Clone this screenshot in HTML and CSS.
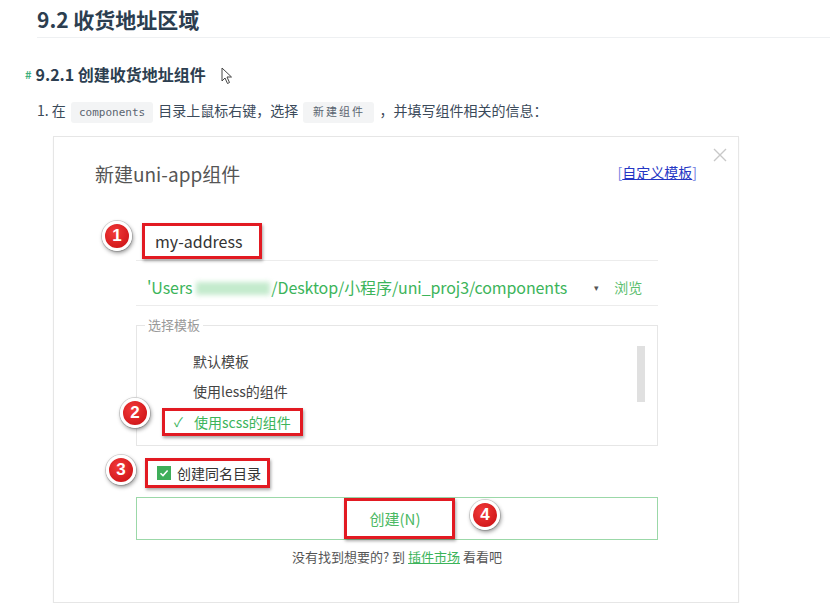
FILE: index.html
```html
<!DOCTYPE html>
<html lang="zh-CN">
<head>
    <meta charset="UTF-8">
    <meta name="viewport" content="width=device-width, initial-scale=1.0">
    <title>9.2 收货地址区域</title>
    <link rel="stylesheet" href="styles.css">
</head>
<body>
    <div class="doc">
        <h2 class="title">9.2 收货地址区域</h2>

        <h3 class="subtitle">
            <span class="anchor">#</span>9.2.1 创建收货地址组件
            <svg class="cursor" width="12" height="18" viewBox="0 0 12 18">
                <path d="M1 1 L1 14 L4 11 L6.5 16.5 L8.5 15.5 L6 10 L10.5 10 Z" fill="#fff" stroke="#444" stroke-width="1" stroke-linejoin="round"/>
            </svg>
        </h3>

        <ol class="steps">
            <li>在 <code>components</code> 目录上鼠标右键，选择 <code class="cjk">新建组件</code> ，并填写组件相关的信息：</li>
        </ol>

        <!-- screenshot of the HBuilderX dialog -->
        <div class="dialog">
            <svg class="close" width="14" height="14" viewBox="0 0 14 14">
                <path d="M1 1 L13 13 M13 1 L1 13" stroke="#c8c8c8" stroke-width="1.4"/>
            </svg>

            <div class="dlg-head">
                <span class="dlg-title">新建uni-app组件</span>
                <a class="tpl-link"><span class="bracket">[</span><u>自定义模板</u><span class="bracket">]</span></a>
            </div>

            <div class="form">
                <div class="field name-field">
                    <span class="mark name-mark">my-address</span>
                </div>

                <div class="field path-field">
                    <span class="path">'Users<span class="blur"></span>/Desktop/小程序/uni_proj3/components</span>
                    <span class="caret">▾</span>
                    <span class="browse">浏览</span>
                </div>

                <fieldset class="tpl-box">
                    <legend>选择模板</legend>
                    <div class="tpl-inner">
                        <ul class="tpl-list">
                            <li>默认模板</li>
                            <li>使用less的组件</li>
                            <li class="sel"><span class="mark sel-mark"><span class="tick">✓</span>使用scss的组件</span></li>
                        </ul>
                        <div class="scrollbar"></div>
                    </div>
                </fieldset>

                <div class="check-row">
                    <span class="mark check-mark">
                        <svg class="checkbox" width="14" height="14" viewBox="0 0 14 14">
                            <rect width="14" height="14" fill="#3fae5a"/>
                            <path d="M3.5 7.2 L6 9.6 L10.6 4.6" fill="none" stroke="#fff" stroke-width="1.5"/>
                        </svg>
                        创建同名目录
                    </span>
                </div>

                <div class="create-btn">
                    <span class="mark btn-mark">创建(N)</span>
                </div>

                <p class="more">没有找到想要的? 到 <a>插件市场</a> 看看吧</p>
            </div>

            <span class="badge b1">1</span>
            <span class="badge b2">2</span>
            <span class="badge b3">3</span>
            <span class="badge b4">4</span>
        </div>
    </div>
</body>
</html>
```

FILE: styles.css
```css
body {
    margin: 0;
    font-family: "Noto Sans CJK SC", "Noto Sans", sans-serif;
    color: #2c3e50;
    background: #fff;
}
.doc {
    padding-left: 37px;
}
.title {
    margin: 0;
    padding-top: 4px;
    padding-bottom: 3px;
    font-size: 21px;
    line-height: 30px;
    font-weight: 700;
    border-bottom: 1px solid #eef0f2;
}
.subtitle {
    position: relative;
    margin: 25px 0 0;
    font-size: 16px;
    line-height: 22px;
    font-weight: 700;
}
.anchor {
    margin-left: -12px;
    margin-right: 4px;
    font-size: 11px;
    color: #3eaf7c;
    vertical-align: 2px;
}
.cursor {
    position: absolute;
    left: 184px;
    top: 4px;
}
.steps {
    margin: 13px 0 0;
    padding: 0;
    list-style-position: inside;
    font-size: 14px;
    line-height: 24px;
    color: #3b4a5a;
}
.steps code {
    font-family: "DejaVu Sans Mono", monospace;
    font-size: 11px;
    color: #5a6470;
    background: #f3f4f5;
    padding: 4px 8px;
    margin: 0 2px;
    border-radius: 3px;
}
.steps code.cjk {
    letter-spacing: 2px;
    padding: 4px 9px 4px 10px;
}

/* dialog */
.dialog {
    position: relative;
    margin: 11px 0 0 16px;
    width: 684px;
    padding: 24px 0 35px;
    border: 1px solid #e6e6e6;
    box-shadow: 0 2px 2px rgba(0, 0, 0, 0.04);
    color: #444;
}
.close {
    position: absolute;
    top: 11px;
    right: 11px;
}
.dlg-head {
    display: flex;
    justify-content: space-between;
    align-items: center;
    padding: 0 41px 0 41px;
}
.dlg-title {
    font-size: 19px;
    line-height: 26px;
    color: #555;
}
.tpl-link {
    font-size: 14px;
    line-height: 20px;
    margin-top: -4px;
    color: #2436c4;
}
.tpl-link .bracket {
    color: #6f80e0;
}
.form {
    margin: 34px 0 0 82px;
    width: 522px;
}
.field {
    display: flex;
    align-items: center;
    border-bottom: 1px solid #ececec;
}
.name-field {
    height: 39px;
}
.path-field {
    height: 36px;
    padding-top: 8px;
    padding-left: 11px;
    color: #3cb45a;
}
.path {
    font-size: 16px;
    letter-spacing: -0.1px;
}
.blur {
    display: inline-block;
    width: 74px;
    height: 13px;
    margin: 0 1px 0 4px;
    background: #c4ebcd;
    filter: blur(2.5px);
    vertical-align: -1px;
}
.caret {
    margin-left: 27px;
    font-size: 9px;
    color: #555;
}
.browse {
    margin-left: 15px;
    font-size: 14px;
    color: #5cc06f;
}
.mark {
    display: inline-flex;
    align-items: center;
    border: 3px solid #e21a22;
    box-shadow: 1px 2px 3px rgba(0, 0, 0, 0.35);
}
.name-mark {
    height: 30px;
    margin-left: 6px;
    padding: 0 17px 0 10px;
    font-size: 16px;
    color: #333;
}
.tpl-box {
    margin: 10px 0 0;
    padding: 0 0 9px;
    border: 1px solid #e6e6e6;
}
.tpl-box legend {
    margin-left: 8px;
    padding: 0 3px;
    font-size: 13px;
    line-height: 18px;
    color: #999;
}
.tpl-inner {
    display: flex;
    justify-content: space-between;
    padding-top: 12px;
}
.tpl-list {
    margin: 0;
    padding: 0;
    list-style: none;
    font-size: 14px;
    line-height: 30px;
    color: #444;
}
.tpl-list li {
    height: 30px;
    padding-left: 56px;
}
.tpl-list li.sel {
    padding-left: 25px;
}
.sel-mark {
    height: 22px;
    padding: 0 9px 0 9px;
    color: #3cb45a;
}
.tick {
    width: 20px;
    font-size: 13px;
}
.scrollbar {
    width: 8px;
    height: 56px;
    margin-right: 12px;
    background: #e0e0e0;
}
.check-row {
    margin-top: 12px;
}
.check-mark {
    height: 24px;
    margin-left: 9px;
    padding: 0 6px 0 9px;
    font-size: 14px;
    color: #333;
}
.checkbox {
    margin-right: 6px;
}
.create-btn {
    display: flex;
    justify-content: center;
    margin-top: 9px;
    height: 41px;
    border: 1px solid #9bd8a8;
}
.btn-mark {
    padding: 0 31px 0 23px;
    margin-left: 4px;
    font-size: 15px;
    color: #4cb964;
}
.more {
    margin: 7px 0 0;
    text-align: center;
    font-size: 13px;
    line-height: 20px;
    color: #555;
}
.more a {
    color: #3cb45a;
    text-decoration: underline;
}
.badge {
    position: absolute;
    width: 24px;
    height: 24px;
    border: 3px solid #fff;
    border-radius: 50%;
    background: radial-gradient(circle at 40% 35%, #f23a3a, #c70d10);
    box-shadow: 1px 2px 4px rgba(0, 0, 0, 0.45), 0 0 0 1px #ddd;
    color: #fff;
    font-family: "Liberation Sans", sans-serif;
    font-weight: 700;
    font-size: 17px;
    line-height: 24px;
    text-align: center;
}
.b1 { left: 48px; top: 84px; }
.b2 { left: 66px; top: 261px; }
.b3 { left: 52px; top: 318px; }
.b4 { left: 416px; top: 363px; }
```
